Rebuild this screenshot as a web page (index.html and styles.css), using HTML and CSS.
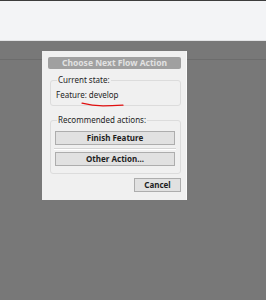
FILE: index.html
```html
<!DOCTYPE html>
<html>
<head>
    <meta charset="UTF-8">
    <title>Choose Next Flow Action</title>
    <link rel="stylesheet" href="styles.css">
</head>
<body>
    <div class="topline"></div>
    <div class="workspace"></div>
    <div class="overlay">
        <div class="toolbar"></div>
    </div>

    <div class="dialog">
        <div class="title">Choose Next Flow Action</div>
        <fieldset class="group state">
            <legend>Current state:</legend>
            <p class="feature">Feature: develop</p>
            <svg class="scribble" width="44" height="6" viewBox="0 0 44 6">
                <path d="M1 1.2 C 8 3, 14 3.8, 22 3.8 S 36 3.5, 42 3.2" fill="none" stroke="#e01010" stroke-width="1.2" stroke-linecap="round"/>
            </svg>
        </fieldset>
        <fieldset class="group actions">
            <legend>Recommended actions:</legend>
            <button class="btn wide">Finish Feature</button>
            <hr>
            <button class="btn wide">Other Action...</button>
        </fieldset>
        <div class="footer">
            <button class="btn cancel">Cancel</button>
        </div>
    </div>
</body>
</html>
```

FILE: styles.css
```css
* {
    box-sizing: border-box;
}
body {
    margin: 0;
    height: 300px;
    font-family: "Noto Sans", "Open Sans", sans-serif;
    font-size: 8px;
    color: #1e1e1e;
    background-color: #787878;
    position: relative;
    overflow: hidden;
}
.topline {
    height: 1px;
    background: #3c3c3c;
}
.workspace {
    height: 40px;
    background: #f3f4f6;
    border-bottom: 1px solid #e2e3e5;
}
.toolbar {
    height: 19px;
    border-bottom: 1px solid #6c6c6c;
}

/* modal sits over the page */
.dialog {
    position: absolute;
    left: 42px;
    top: 51px;
    width: 145px;
    height: 149px;
    padding: 6px 5px 0 6px;
    background: #f0f0f0;
    border-right: 1px solid #fafafa;
    display: flex;
    flex-direction: column;
}
.title {
    height: 12px;
    line-height: 12px;
    background: #a0a0a0;
    color: #e2e2e2;
    font-weight: bold;
    font-size: 8.5px;
    text-align: center;
    border-radius: 2px;
}
.group {
    margin: 5px 0 0 2px;
    padding: 0 6px 0 4px;
    border: 1px solid #dcdcdc;
    border-radius: 3px;
    min-width: 0;
    position: relative;
}
.group legend {
    padding: 0 1px;
    margin-left: 2px;
    height: 12px;
    line-height: 12px;
}
.state {
    padding-bottom: 4px;
}
.feature {
    margin: 3px 0 0 1px;
    height: 12px;
    line-height: 12px;
}
.scribble {
    position: absolute;
    left: 30px;
    top: 16px;
}
.actions {
    margin-top: 8px;
    padding-top: 5px;
    padding-bottom: 7px;
}
.actions hr {
    margin: 3px -2px 2px -1px;
    height: 2px;
    border: 0;
    border-top: 1px solid #d6d6d6;
    border-bottom: 1px solid #ffffff;
}
.btn {
    display: block;
    font-family: inherit;
    font-size: 8px;
    font-weight: bold;
    color: #1e1e1e;
    background: #e1e1e1;
    border: 1px solid #adadad;
    height: 14px;
    padding: 0;
    line-height: 12px;
}
.wide {
    width: 120px;
}
.footer {
    display: flex;
    justify-content: flex-end;
    margin-top: 4px;
}
.cancel {
    width: 47px;
}
```
